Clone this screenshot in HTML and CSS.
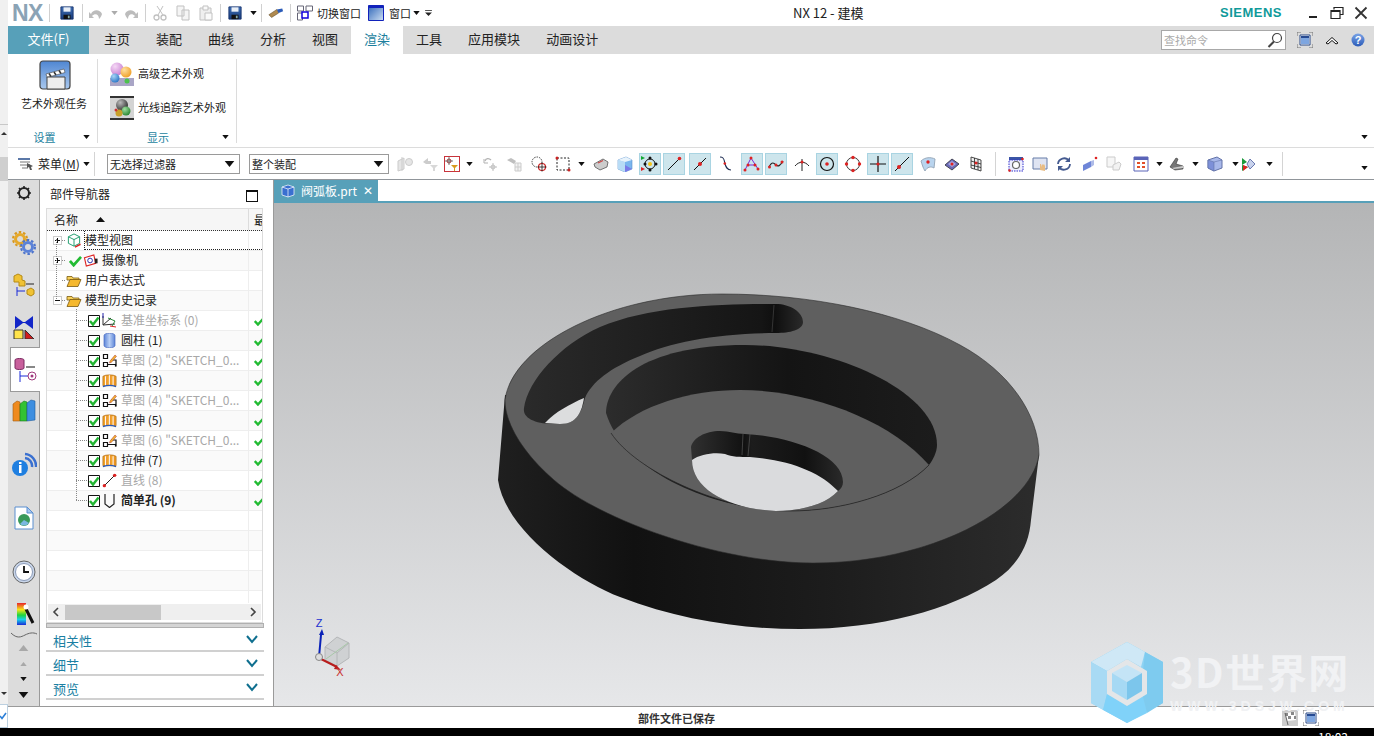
FILE: index.html
```html
<!DOCTYPE html>
<html lang="zh">
<head>
<meta charset="utf-8">
<title>NX 12 - 建模</title>
<link rel="stylesheet" href="styles.css">
</head>
<body>
<svg class="defs" aria-hidden="true">
  <defs>
    <linearGradient id="gPocket" x1="0" x2="1" y1="0" y2="0"><stop offset="0" stop-color="#2c2c2c"/><stop offset=".55" stop-color="#141414"/><stop offset="1" stop-color="#1c1c1c"/></linearGradient>
    <linearGradient id="gSide" gradientUnits="userSpaceOnUse" x1="498" x2="1040" y1="0" y2="0"><stop offset="0" stop-color="#1f1f1f"/><stop offset=".25" stop-color="#111"/><stop offset=".6" stop-color="#1c1c1c"/><stop offset="1" stop-color="#2c2c2c"/></linearGradient>
    <linearGradient id="gSlot" gradientUnits="userSpaceOnUse" x1="524" x2="803" y1="0" y2="0"><stop offset="0" stop-color="#2a2a2a"/><stop offset=".85" stop-color="#151515"/><stop offset=".9" stop-color="#0f0f0f"/><stop offset="1" stop-color="#2a2a2a"/></linearGradient>
    <linearGradient id="gHole" gradientUnits="userSpaceOnUse" x1="691" x2="843" y1="0" y2="0"><stop offset="0" stop-color="#303030"/><stop offset=".35" stop-color="#111"/><stop offset=".4" stop-color="#1c1c1c"/><stop offset=".75" stop-color="#111"/><stop offset="1" stop-color="#2a2a2a"/></linearGradient>
    <linearGradient id="gFloppy" x1="0" x2="0" y1="0" y2="1"><stop offset="0" stop-color="#3e6fb5"/><stop offset="1" stop-color="#173a78"/></linearGradient>
    <linearGradient id="gSky" x1="0" x2="1" y1="0" y2="1"><stop offset="0" stop-color="#2f66b8"/><stop offset="1" stop-color="#cfe0f4"/></linearGradient>
    <linearGradient id="gClap" x1="0" x2="0" y1="0" y2="1"><stop offset="0" stop-color="#4f86d2"/><stop offset="1" stop-color="#a9c8ee"/></linearGradient>
    <linearGradient id="gCyl" x1="0" x2="1" y1="0" y2="0"><stop offset="0" stop-color="#5c85d8"/><stop offset=".5" stop-color="#b9cff5"/><stop offset="1" stop-color="#5c85d8"/></linearGradient>
    <linearGradient id="gHelp" x1="0" x2="0" y1="0" y2="1"><stop offset="0" stop-color="#7aa3e6"/><stop offset="1" stop-color="#2b5bb8"/></linearGradient>
    <linearGradient id="gRainbow" x1="0" x2="0" y1="0" y2="1"><stop offset="0" stop-color="#e8232a"/><stop offset=".3" stop-color="#f5e51b"/><stop offset=".55" stop-color="#1fd43c"/><stop offset=".75" stop-color="#18cfe8"/><stop offset="1" stop-color="#1a2bd8"/></linearGradient>
    <radialGradient id="gBall1" cx=".35" cy=".3" r=".8"><stop offset="0" stop-color="#f5d8f5"/><stop offset="1" stop-color="#c47ad0"/></radialGradient>
    <radialGradient id="gBall2" cx=".35" cy=".3" r=".8"><stop offset="0" stop-color="#ffe0a0"/><stop offset="1" stop-color="#ee9a1e"/></radialGradient>
    <radialGradient id="gBall3" cx=".35" cy=".3" r=".8"><stop offset="0" stop-color="#a8d4f5"/><stop offset="1" stop-color="#2170c4"/></radialGradient>
    <radialGradient id="gBall4" cx=".35" cy=".3" r=".8"><stop offset="0" stop-color="#bbb"/><stop offset="1" stop-color="#222"/></radialGradient>
    <radialGradient id="gBall5" cx=".35" cy=".3" r=".8"><stop offset="0" stop-color="#a0e0a0"/><stop offset="1" stop-color="#1f7f28"/></radialGradient>
    <symbol id="floppy" viewBox="0 0 16 16"><path d="M1 1h14v14H1z" fill="url(#gFloppy)" stroke="#12306a"/><path d="M4 1.500h8v5H4z" fill="#e8eef6"/><path d="M4 10h8v5H4z" fill="#111"/><path d="M9 11h2v3H9z" fill="#8aa"/></symbol>
    <symbol id="arrow" viewBox="0 0 8 5"><path d="M0 0h8L4 5z" fill="#111"/></symbol>
    <symbol id="check" viewBox="0 0 14 12"><path d="M1 6l4 4.500L13 1.500" fill="none" stroke="#22bb33" stroke-width="3"/></symbol>
    <symbol id="box" viewBox="0 0 12 12"><path d="M.5.500h11v11H.5z" fill="#fff" stroke="#111"/><path d="M2 6l3 3.500L10.500 2.500" fill="none" stroke="#22b533" stroke-width="2.400"/></symbol>
    <symbol id="folder" viewBox="0 0 16 14"><path d="M1 3h5l1 1.500h6v2H1z" fill="#f8d25c" stroke="#7a5a10" stroke-width=".8"/><path d="M1 13l3-7h11l-3 7z" fill="#f5b82e" stroke="#7a5a10" stroke-width=".8"/></symbol>
    <symbol id="sketch" viewBox="0 0 15 15"><path d="M1.500 1.500h4v4h-4zM1.500 9.500h4v4h-4zM5.500 11.500h8v2" fill="#fff" stroke="#111" stroke-width="1.200"/><path d="M9 7h5v6.500" fill="none" stroke="#111" stroke-width="1.200"/><path d="M8 8l5-6 1.500 1.300-5 6-2 .6z" fill="#f3b52e" stroke="#a33" stroke-width=".5"/></symbol>
    <symbol id="extrude" viewBox="0 0 16 15"><path d="M1 3c3-2 11-2 14 0v10H1z" fill="#f2a428" stroke="#b36a10" stroke-width=".8"/><path d="M4 3v10M8 2v11M12 3v10" stroke="#fff" stroke-width="1.400"/><path d="M4.800 3v10M8.800 2v11M12.800 3v10" stroke="#e0700f" stroke-width=".6"/><path d="M1 14c4-1.500 10-1.500 14 0" stroke="#2b5bb8" stroke-width="1.500" fill="none"/></symbol>
    <symbol id="ln" viewBox="0 0 16 16"><path d="M2 14L14 2" stroke="#111" stroke-width="1"/><circle cx="2.500" cy="13.500" r="1.800" fill="#d22"/><circle cx="13.500" cy="2.500" r="1.800" fill="#d22"/></symbol>
    <symbol id="sw" viewBox="0 0 16 16"><path d="M3 1c5 0 4 4 5 7s2 6 6 6" fill="none" stroke="#1c2a50" stroke-width="1.100"/><circle cx="7.800" cy="7.500" r="1.300" fill="#d22"/></symbol>
    <symbol id="panel" viewBox="0 0 16 16"><path d="M0 4V0h4M12 0h4v4M16 12v4h-4M4 16H0v-4" fill="none" stroke="#777"/><path d="M3 3h10v10H3z" fill="#fff" stroke="#2b4a88"/><path d="M4 4h8v2H4z" fill="#264a92"/><path d="M4 6h8v6H4z" fill="#7ea6e0"/></symbol>
  </defs>
</svg>

<div class="upper">
  <div class="strip">
    <div class="strip-top"></div><span class="strip-tri"></span><div class="strip-gray"></div>
    <span class="strip-down"></span>
    <div class="strip-check"><svg viewBox="0 0 7 8"><path d="M0 4l2 2.500L6 1" fill="none" stroke="#2b7fd8" stroke-width="1.600"/></svg></div>
  </div>
  <div class="main">
    <header class="titlebar">
      <div class="qat">
        <b class="logo">NX</b><i class="qsep"></i>
        <svg class="q14"><use href="#floppy"/></svg><i class="qsep"></i>
        <svg class="q16 dim" viewBox="0 0 16 14"><path d="M3 8c2-5 9-5 11 0-1 3-2 4-3 5 0-5-4-6-7-3l2 2H1V6z" fill="#b5b5b5"/></svg>
        <svg class="a6 faint"><use href="#arrow"/></svg>
        <svg class="q16 dim" viewBox="0 0 16 14"><path d="M13 8C11 3 4 3 2 8c1 3 2 4 3 5 0-5 4-6 7-3l-2 2h5V6z" fill="#b5b5b5"/></svg><i class="qsep"></i>
        <svg class="q16 dim" viewBox="0 0 16 16"><path d="M11 1L6 10M5 1l6 9" stroke="#bbb" fill="none"/><circle cx="4.500" cy="12.500" r="2.500" fill="none" stroke="#bbb" stroke-width="1.300"/><circle cx="11.500" cy="12.500" r="2.500" fill="none" stroke="#bbb" stroke-width="1.300"/></svg>
        <svg class="q16 dim" viewBox="0 0 16 16"><path d="M2 1h7v10H2zM7 5h7v10H7z" fill="#f4f4f4" stroke="#bbb"/></svg>
        <svg class="q16 dim" viewBox="0 0 16 16"><path d="M2 3h11v12H2z" fill="#eee" stroke="#bbb"/><path d="M5 1h5v4H5zM7 8h7v7H7z" fill="#fafafa" stroke="#bbb"/></svg><i class="qsep"></i>
        <svg class="q14"><use href="#floppy"/></svg>
        <svg class="a6"><use href="#arrow"/></svg><i class="qsep"></i>
        <svg class="q16" viewBox="0 0 18 12"><path d="M1 8l9-6 2 4-8 5z" fill="#b08a50" stroke="#5b4520" stroke-width=".6"/><path d="M10 2l6-1 1 3-5 2z" fill="#2b5bb8"/></svg><i class="qsep"></i>
        <svg class="q16" viewBox="0 0 16 16"><path d="M.5 1h6v5h-6zM9 1h6.500v5H9zM.5 8h5v7h-5z" fill="#fff" stroke="#667"/><path d="M5 7h6v6H5z" fill="#fff" stroke="#10d" stroke-width="1.500"/></svg>
        <span class="qtext">切换窗口</span>
        <svg class="q16 q-win" viewBox="0 0 16 16"><path d="M.5.500h15v15H.5z" fill="url(#gSky)" stroke="#12b"/><path d="M1 1h14v2H1z" fill="#12b"/></svg>
        <span class="qtext">窗口</span>
        <svg class="a6"><use href="#arrow"/></svg>
        <svg class="cust" viewBox="0 0 8 7"><path d="M0 0h8v1H0z M0 3h8L4 7z" fill="#222"/></svg>
      </div>
      <div class="doc-title">NX 12 - 建模</div>
      <div class="brand">SIEMENS</div>
      <div class="winctl">
        <svg viewBox="0 0 14 14"><path d="M3 11h8" stroke="#222" stroke-width="2"/></svg>
        <svg viewBox="0 0 14 14"><path d="M4 3.500V1.500h9v7h-3M1 4.500h9v8H1z" fill="#fff" stroke="#222" stroke-width="1.200"/><path d="M1 5h9" stroke="#222" stroke-width="2"/></svg>
        <svg viewBox="0 0 14 14"><path d="M1.500 1.500l11 11M12.500 1.500l-11 11" stroke="#333" stroke-width="1.800"/></svg>
      </div>
    </header>

    <nav class="tabs">
      <a class="tab-file">文件(F)</a>
      <a class="tab">主页</a><a class="tab">装配</a><a class="tab">曲线</a><a class="tab">分析</a><a class="tab">视图</a>
      <a class="tab active">渲染</a><a class="tab">工具</a><a class="tab">应用模块</a><a class="tab">动画设计</a>
      <div class="tabs-right">
        <div class="search"><span>查找命令</span><svg viewBox="0 0 16 16"><circle cx="10" cy="6" r="4.500" fill="#fff" stroke="#444" stroke-width="1.200"/><path d="M7 9.500L1.500 15" stroke="#444" stroke-width="2"/></svg></div>
        <svg class="rt-panel"><use href="#panel"/></svg>
        <svg class="rt-chev" viewBox="0 0 14 9"><path d="M1 7l6-5.500L13 7l-2 1-4-3.500L3 8z" fill="#fff" stroke="#111"/></svg>
        <svg class="rt-help" viewBox="0 0 14 14"><circle cx="7" cy="7" r="6.500" fill="url(#gHelp)"/><text x="7" y="11" class="help-q">?</text></svg>
      </div>
    </nav>

    <section class="ribbon">
      <div class="group g1">
        <div class="big">
          <svg class="clap" viewBox="0 0 32 30"><rect x="1" y="1" width="30" height="28" rx="3" fill="url(#gClap)" stroke="#444" stroke-width="1.200"/><path d="M7 14l18-5 1 3.500-18 5z" fill="#fff" stroke="#444" stroke-width=".6"/><path d="M10 13.500l2 3M15 12l2 3M20 10.500l2 3" stroke="#333" stroke-width="1.500"/><path d="M8 17h18v12H8z" fill="#eee" stroke="#444"/></svg>
          <span>艺术外观任务</span>
        </div>
        <div class="glabel"><span>设置</span><svg class="a6"><use href="#arrow"/></svg></div>
      </div>
      <div class="group g2">
        <div class="smalls">
          <div class="small"><svg class="rb24" viewBox="0 0 24 24"><path d="M0 16h24v8H0z" fill="#a9a5c6"/><circle cx="7" cy="7" r="6.500" fill="url(#gBall1)"/><circle cx="16" cy="10" r="5.500" fill="url(#gBall2)"/><circle cx="5" cy="16" r="4.500" fill="url(#gBall3)"/><circle cx="17" cy="19" r="2.500" fill="#4dc24d"/></svg><span>高级艺术外观</span></div>
          <div class="small"><svg class="rb24" viewBox="0 0 24 24"><path d="M0 0h24v24H0z" fill="#d4d4d4"/><path d="M0 0h24v2H0zM0 22h24v2H0z" fill="#333"/><circle cx="12" cy="9" r="6" fill="url(#gBall4)"/><circle cx="16" cy="15" r="4.500" fill="url(#gBall5)"/><circle cx="9" cy="17" r="3.500" fill="#c8a02a"/><circle cx="6" cy="14" r="1.500" fill="#c33"/></svg><span>光线追踪艺术外观</span></div>
        </div>
        <div class="glabel"><span>显示</span><svg class="a6"><use href="#arrow"/></svg></div>
      </div>
      <svg class="a6 ribbon-more"><use href="#arrow"/></svg>
    </section>

    <section class="toolbar">
      <div class="menu-btn">
        <svg viewBox="0 0 16 14"><path d="M0 1h12v2H0z" fill="#5b78a8"/><path d="M2 5h10M2 8h10M4 11h6" stroke="#777"/><path d="M9 6l6 3-2 1 1 3-2 0-1-3-2 1z" fill="#555"/></svg>
        <span>菜单(<u>M</u>)</span><svg class="a6"><use href="#arrow"/></svg>
      </div>
      <i class="tsep"></i>
      <div class="select s-a"><span>无选择过滤器</span><svg class="a7"><use href="#arrow"/></svg></div>
      <div class="select s-b"><span>整个装配</span><svg class="a7"><use href="#arrow"/></svg></div>
      <div class="tools">
        <div><svg class="t16 off" viewBox="0 0 16 16"><path d="M1 5l6-3v11l-6 2zM5 1v14" fill="#ddd" stroke="#bbb"/><circle cx="12" cy="6" r="3.500" fill="#ddd" stroke="#bbb"/></svg></div>
        <div><svg class="t16 off" viewBox="0 0 16 16"><path d="M1 6l5-4v3h3v3H4z" fill="#bbb"/><path d="M8 9h8l-3 3v3h-2v-3z" fill="#ccc"/></svg></div>
        <div><div class="redbox"><svg class="t14" viewBox="0 0 14 14"><circle cx="4" cy="4" r="2" fill="none" stroke="#a33"/><path d="M4 0v8M0 4h8" stroke="#555" stroke-width=".8"/><path d="M6 8h7l-3 3v3H9v-3z" fill="#d89b1e"/></svg></div></div>
        <div><svg class="a6"><use href="#arrow"/></svg></div>
        <div><svg class="t16 off" viewBox="0 0 16 16"><path d="M2 5c1-3 4-3 6-1" fill="none" stroke="#999" stroke-width="1.300"/><path d="M1 3v4h4" fill="none" stroke="#999"/><path d="M10 7v8M6 11h8" stroke="#aaa"/><circle cx="10" cy="11" r="2" fill="none" stroke="#aaa"/></svg></div>
        <div><svg class="t16 off" viewBox="0 0 16 16"><path d="M1 4l4-2 5 3-2 3z" fill="#aaa"/><path d="M9 7h6v8H9zM12 7v8M9 11h6" fill="#eee" stroke="#bbb"/></svg></div>
        <div><svg class="t16" viewBox="0 0 16 16"><circle cx="6" cy="6" r="5" fill="none" stroke="#444" stroke-dasharray="1.500 1"/><circle cx="11" cy="11" r="3.500" fill="#fff" stroke="#c22" stroke-width="1.200"/><path d="M11 6.500v9M6.500 11h9" stroke="#111" stroke-width=".8"/></svg></div>
        <div><svg class="t16" viewBox="0 0 16 16"><path d="M2 2h12v12H2z" fill="none" stroke="#222" stroke-dasharray="2 1.500"/><circle cx="2" cy="2" r="1.500" fill="#c22"/><circle cx="14" cy="14" r="1.500" fill="#c22"/></svg></div>
        <div><svg class="a6"><use href="#arrow"/></svg></div>
        <div><svg class="t16" viewBox="0 0 16 16"><path d="M1 8l9-5 5 3-1 5-7 3-5-3z" fill="#ccc" stroke="#555" stroke-width=".8"/><path d="M5 7l5-2.500" stroke="#c44" stroke-width="1.200"/></svg></div>
        <div><svg class="t16" viewBox="0 0 16 16"><path d="M1 4l8-3 6 3v9l-7 3-7-3z" fill="#7ab6ee" stroke="#5b8fc9" stroke-width=".6"/><path d="M1 4l7 2v10l-7-3z" fill="#b8dcf6"/><path d="M1 4l8-3 6 3-7 2z" fill="#e8f3fb"/><path d="M8 9l7 4-7 3z" fill="#7a7ae8"/></svg></div>
        <div><div class="on"><svg class="t18" viewBox="0 0 18 18"><circle cx="9" cy="9" r="5" fill="none" stroke="#111"/><circle cx="9" cy="9" r="2" fill="#f5c518"/><circle cx="9" cy="3" r="1.500" fill="#111"/><circle cx="9" cy="15" r="1.500" fill="#111"/><circle cx="15" cy="9" r="1.500" fill="#111"/><circle cx="4" cy="9" r="1.500" fill="#111"/><path d="M0 1l4 2-4 2z" fill="#1a3"/><path d="M0 12l4 2-4 2z" fill="#d22"/></svg></div></div>
        <div><div class="on"><svg class="t16" viewBox="0 0 16 16"><path d="M2 14L14 2" stroke="#111"/><circle cx="13.500" cy="2.500" r="1.800" fill="#d22"/></svg></div></div>
        <i></i>
        <div><div class="on"><svg class="t16" viewBox="0 0 16 16"><path d="M2 14L14 2" stroke="#111"/><circle cx="8" cy="8" r="2" fill="#d22"/></svg></div></div>
        <div><svg class="t16"><use href="#sw"/></svg></div>
        <i></i>
        <div><div class="on"><svg class="t18" viewBox="0 0 18 18"><path d="M2 15L8 3l7 11" fill="none" stroke="#7a2ad8"/><path d="M4 10h9" stroke="#7a2ad8"/><circle cx="2" cy="15" r="1.500" fill="#d22"/><circle cx="8" cy="3" r="1.500" fill="#d22"/><circle cx="15" cy="14" r="1.500" fill="#d22"/><circle cx="5" cy="10" r="1.500" fill="#d22"/><circle cx="12" cy="10" r="1.500" fill="#d22"/></svg></div></div>
        <div><div class="on"><svg class="t18" viewBox="0 0 18 18"><path d="M2 12c3-6 5-4 7-2s4 1 7-4" fill="none" stroke="#222" stroke-width="1.200"/><circle cx="2.500" cy="12" r="1.500" fill="#d22"/><circle cx="9" cy="10" r="1.500" fill="#d22"/><circle cx="15" cy="7" r="1.500" fill="#d22"/></svg></div></div>
        <div><svg class="t16" viewBox="0 0 16 16"><path d="M1 10c4-5 10-5 14 0M8 3v12" fill="none" stroke="#222"/><circle cx="8" cy="6" r="1.500" fill="#d22"/></svg></div>
        <div><div class="on"><svg class="t18" viewBox="0 0 18 18"><circle cx="9" cy="9" r="6.500" fill="none" stroke="#111" stroke-width="1.200"/><circle cx="9" cy="9" r="1.800" fill="#d22"/></svg></div></div>
        <div><svg class="t18" viewBox="0 0 18 18"><circle cx="9" cy="9" r="6.500" fill="none" stroke="#333"/><g fill="#d22"><circle cx="9" cy="2.500" r="1.700"/><circle cx="9" cy="15.500" r="1.700"/><circle cx="2.500" cy="9" r="1.700"/><circle cx="15.500" cy="9" r="1.700"/></g></svg></div>
        <div><div class="on"><svg class="t18" viewBox="0 0 18 18"><path d="M9 1v16M1 9h16" stroke="#111" stroke-width="1.200"/><circle cx="9" cy="9" r="1.600" fill="#d22"/></svg></div></div>
        <div><div class="on"><svg class="t16" viewBox="0 0 16 16"><path d="M1 15L15 1" stroke="#111"/><circle cx="5" cy="11" r="2" fill="#d22"/></svg></div></div>
        <div><svg class="t16" viewBox="0 0 16 16"><path d="M1 5c4-4 10-4 14-2l-1 9c-3-2-7-1-9 3C3 12 2 8 1 5z" fill="#b9d4ee" stroke="#9ab"/><circle cx="8" cy="6" r="1.700" fill="#d22"/></svg></div>
        <div><svg class="t16" viewBox="0 0 16 16"><path d="M1 9l7-6 7 5-7 6z" fill="#6a6ab8" stroke="#445"/><path d="M4 8l4-3 4 3-4 3z" fill="#a8a8e0"/><circle cx="8" cy="8" r="1.500" fill="#d22"/></svg></div>
        <div><svg class="t16" viewBox="0 0 16 16"><path d="M3 1l10 3v11L3 12zM6.500 2v11M10 3v11M3 5l10 3M3 9l10 2.500" fill="#eee" stroke="#222" stroke-width=".8"/><circle cx="8" cy="7" r="1.500" fill="#d22"/></svg></div>
        <div class="vsep"><i class="tsep"></i></div>
        <div><svg class="t16" viewBox="0 0 16 16"><path d="M1 1h14v3H1z" fill="#3a55a5"/><path d="M1 4h14v11H1z" fill="#eef" stroke="#33c" stroke-dasharray="1.500 1"/><circle cx="8" cy="9" r="3.500" fill="#fff" stroke="#666" stroke-width="1.200"/><circle cx="1.500" cy="14.500" r="1.300" fill="#d22"/><circle cx="14.500" cy="3" r="1.300" fill="#d22"/></svg></div>
        <div><svg class="t16" viewBox="0 0 16 16"><path d="M1 2h14v11H1z" fill="#dfe4f2" stroke="#667ca8"/><path d="M8 14V8l1 0 0 3 1-3 1 1 1-1 1 2 0 5z" fill="#e8bc84"/></svg></div>
        <div><svg class="t16" viewBox="0 0 16 16"><path d="M2 8a6 6 0 0 1 11-3M14 8a6 6 0 0 1-11 3" fill="none" stroke="#445a90" stroke-width="1.800"/><path d="M14 1v5h-5zM2 15v-5h5z" fill="#445a90"/></svg></div>
        <div><svg class="t16" viewBox="0 0 16 16"><path d="M1 9l8-4v6l-8 4z" fill="#6f86d8"/><path d="M9 5l3-1v5l-3 2z" fill="#aebbe8"/><circle cx="14" cy="2" r="1.300" fill="#d22"/></svg></div>
        <div><svg class="t16 off" viewBox="0 0 16 16"><path d="M1 1h8v10H1z" fill="#f4f4f4" stroke="#bbb"/><path d="M7 9l6-3 2 2-2 6H7z" fill="#eee" stroke="#bbb"/></svg></div>
        <div><svg class="t16" viewBox="0 0 16 16"><path d="M1 1h14v14H1z" fill="#fff" stroke="#5a64b8"/><path d="M1 1h14v3H1z" fill="#5a64b8"/><path d="M4 6h3v2H4zM9 6h3v2H9zM4 10h3v2H4zM9 10h3v2H9z" fill="#e2502a"/></svg></div>
        <div><svg class="a6"><use href="#arrow"/></svg></div>
        <div><svg class="t16" viewBox="0 0 16 16"><path d="M1 11l6-9 2 1-2 5 7 2v3l-8 1z" fill="#777" stroke="#333" stroke-width=".6"/><path d="M3 12l11-2v2l-9 1z" fill="#ccc"/></svg></div>
        <div><svg class="a6"><use href="#arrow"/></svg></div>
        <div><svg class="t16" viewBox="0 0 16 16"><path d="M1 4l9-3 5 3v8l-8 3-6-3z" fill="#a8b8ea" stroke="#6272a8"/><path d="M1 4l6 2v9l-6-3zM7 6l8-2" fill="#7d90d8" stroke="#6272a8" stroke-width=".6"/></svg></div>
        <div><svg class="a6"><use href="#arrow"/></svg></div>
        <div><svg class="t16" viewBox="0 0 16 16"><path d="M8 3l5 5-5 5-3-5z" fill="#c8d2ec" stroke="#6a7ab0"/><path d="M0 2l5 4-5 3zM0 9l6 2-6 4z" fill="#1a9a3a"/><path d="M1 9l5 2-5 4z" fill="#d22"/></svg></div>
        <div><svg class="a6"><use href="#arrow"/></svg></div>
        <div class="vsep"><i class="tsep"></i></div>
      </div>
      <svg class="a6 toolbar-more"><use href="#arrow"/></svg>
    </section>

    <section class="work">
      <aside class="resbar">
        <div><svg class="r16" viewBox="0 0 16 16"><circle cx="8" cy="8" r="5" fill="none" stroke="#222" stroke-width="2"/><path d="M8 1v3M8 12v3M1 8h3M12 8h3M3 3l2 2M11 11l2 2M13 3l-2 2M3 13l2-2" stroke="#222" stroke-width="1.600"/></svg></div>
        <i></i>
        <div><svg class="r24" viewBox="0 0 24 24"><circle cx="8" cy="8" r="4.500" fill="none" stroke="#e6a92a" stroke-width="3"/><circle cx="8" cy="8" r="7" fill="none" stroke="#d9981c" stroke-width="2" stroke-dasharray="2.500 2"/><circle cx="16" cy="16" r="4.500" fill="none" stroke="#5b82d8" stroke-width="3"/><circle cx="16" cy="16" r="7" fill="none" stroke="#4d74cc" stroke-width="2" stroke-dasharray="2.500 2"/></svg></div>
        <div><svg class="r24" viewBox="0 0 24 24"><path d="M2 3l4-2 4 2v4l3 1v5H7V9H2z" fill="#f0c234" stroke="#b58a14"/><path d="M5 14v9M5 18h8" stroke="#1a2bd8"/><path d="M15 17l4-2 3 2v4l-3 2-4-2z" fill="#f0c234" stroke="#b58a14"/><path d="M14 11h8" stroke="#222"/></svg></div>
        <div><svg class="r24" viewBox="0 0 24 24"><path d="M3 1l8 6 2 0 8-6v13l-8-6h-2l-8 6z" fill="#1226c8"/><path d="M2 15h9v9H2z" fill="#ffe44a" stroke="#333"/><path d="M13 24l0-9 9 9z" fill="#d21c1c" stroke="#333"/></svg></div>
        <div class="res-active"><svg class="r26" viewBox="0 0 26 26"><path d="M3 3c0-2 9-2 9 0v8c0 2-9 2-9 0z" fill="#c8609c" stroke="#7a2a60"/><path d="M14 10h9" stroke="#111"/><path d="M8 14v11M8 19h8" stroke="#1a2bd8"/><circle cx="20" cy="19" r="4" fill="#fff" stroke="#a0387c"/><circle cx="20" cy="19" r="1.500" fill="#a0387c"/></svg></div>
        <div><svg class="r24" viewBox="0 0 24 24"><path d="M1 5l4-3 3 1v19H1z" fill="#ef8a1e" stroke="#a05a10" stroke-width=".6"/><path d="M8 5l4-3 3 1v19H8z" fill="#33c233" stroke="#1c7a1c" stroke-width=".6"/><path d="M15 4l4-3 4 1v19l-8 1z" fill="#3d8ee0" stroke="#1c5a9c" stroke-width=".6"/></svg></div>
        <i></i>
        <div><svg class="r26" viewBox="0 0 26 26"><path d="M14 2a12 12 0 0 1 11 13M14 6a8 8 0 0 1 7 9" fill="none" stroke="#3a70d0" stroke-width="2.500"/><circle cx="9" cy="16" r="8" fill="#1f7fe0"/><path d="M8 10h2.500v2H8zM8 13h2.500v8H8z" fill="#fff"/></svg></div>
        <i></i>
        <div><svg class="r24" viewBox="0 0 24 24"><path d="M3 1h12l6 6v16H3z" fill="#fff" stroke="#5b8fd0"/><path d="M15 1v6h6z" fill="#a8c8f0" stroke="#5b8fd0"/><circle cx="12" cy="14" r="6" fill="#3a9a5a"/><path d="M12 14l5 3a6 6 0 0 1-9 1z" fill="#7ab8e0"/></svg></div>
        <i></i>
        <div><svg class="r24" viewBox="0 0 24 24"><circle cx="12" cy="12" r="11" fill="#c9d6ea" stroke="#666"/><circle cx="12" cy="12" r="8.500" fill="#fff" stroke="#8a9ab8"/><path d="M12 6v6h5" stroke="#111" stroke-width="1.800" fill="none"/></svg></div>
        <i></i>
        <div><svg class="r24" viewBox="0 0 24 24"><rect x="5" y="1" width="9" height="22" fill="url(#gRainbow)"/><path d="M14 7l7 14" stroke="#111" stroke-width="3"/><circle cx="14" cy="5" r="2.500" fill="#fff"/></svg></div>
        <i></i>
        <div class="res-nav"><svg class="a7 up"><use href="#arrow"/></svg></div>
        <div class="res-nav"><svg class="a6 up"><use href="#arrow"/></svg></div>
        <div class="res-nav"><svg class="a6"><use href="#arrow"/></svg></div>
        <div class="res-nav"><svg class="a7"><use href="#arrow"/></svg></div>
        <svg class="res-curve" viewBox="0 0 28 8"><path d="M1 3c6 6 10 4 14 2s8-3 12-1" fill="none" stroke="#666"/></svg>
      </aside>

      <aside class="panel">
        <div class="panel-head"><span>部件导航器</span><i class="maxbox"></i></div>
        <div class="table">
          <div class="thead"><div class="th-name"><span>名称</span><svg class="sort" viewBox="0 0 9 5"><path d="M4.500 0L9 5H0z" fill="#111"/></svg></div><div class="th-2">最</div></div>
          <div class="tree">
            <i class="dots-v dv1"></i><i class="dots-v dv2"></i>
            <div class="row"><div class="name"><i class="exp plus"></i><i class="dash"></i><svg class="ric" viewBox="0 0 16 16"><path d="M8 1l6 3v7l-6 3-6-3V4zM2 4l6 3 6-3M8 7v7" fill="none" stroke="#1a9a6a"/><path d="M9 15l6-3" stroke="#d22" stroke-width="1.500"/></svg><span class="focus">模型视图</span></div><div class="c2"></div></div>
            <div class="row alt"><div class="name"><i class="exp plus"></i><i class="dash"></i><svg class="rchk"><use href="#check"/></svg><svg class="ric cam" viewBox="0 0 16 16"><path d="M1 5l10-3 2 9-10 3z" fill="#fff" stroke="#d22" stroke-width="1.200"/><circle cx="7" cy="8" r="2.500" fill="none" stroke="#22a"/><path d="M12 6h3v5h-3" fill="#222"/></svg><span>摄像机</span></div><div class="c2"></div></div>
            <div class="row"><div class="name"><i class="noexp"></i><i class="dash"></i><svg class="ric"><use href="#folder"/></svg><span>用户表达式</span></div><div class="c2"></div></div>
            <div class="row alt"><div class="name"><i class="exp minus"></i><i class="dash"></i><svg class="ric"><use href="#folder"/></svg><span>模型历史记录</span></div><div class="c2"></div></div>
            <div class="row"><div class="name leaf"><i class="dash"></i><svg class="cb"><use href="#box"/></svg><svg class="fic" viewBox="0 0 15 15"><path d="M1 3v9l12-1M1 12l8-7" fill="none" stroke="#333"/><path d="M6 5l7 3-3 5" fill="none" stroke="#2a8a3a"/><path d="M1 0v5" stroke="#22a"/><path d="M8 13l6 1" stroke="#d22"/></svg><span class="mute">基准坐标系 (0)</span></div><div class="c2"><svg class="st"><use href="#check"/></svg></div></div>
            <div class="row alt"><div class="name leaf"><i class="dash"></i><svg class="cb"><use href="#box"/></svg><svg class="fic" viewBox="0 0 15 15"><path d="M2 2.500c0-3 11-3 11 0v10c0 3-11 3-11 0z" fill="url(#gCyl)" stroke="#4a6ac0" stroke-width=".7"/></svg><span>圆柱 (1)</span></div><div class="c2"><svg class="st"><use href="#check"/></svg></div></div>
            <div class="row"><div class="name leaf"><i class="dash"></i><svg class="cb"><use href="#box"/></svg><svg class="fic"><use href="#sketch"/></svg><span class="mute">草图 (2) "SKETCH_0...</span></div><div class="c2"><svg class="st"><use href="#check"/></svg></div></div>
            <div class="row alt"><div class="name leaf"><i class="dash"></i><svg class="cb"><use href="#box"/></svg><svg class="fic"><use href="#extrude"/></svg><span>拉伸 (3)</span></div><div class="c2"><svg class="st"><use href="#check"/></svg></div></div>
            <div class="row"><div class="name leaf"><i class="dash"></i><svg class="cb"><use href="#box"/></svg><svg class="fic"><use href="#sketch"/></svg><span class="mute">草图 (4) "SKETCH_0...</span></div><div class="c2"><svg class="st"><use href="#check"/></svg></div></div>
            <div class="row alt"><div class="name leaf"><i class="dash"></i><svg class="cb"><use href="#box"/></svg><svg class="fic"><use href="#extrude"/></svg><span>拉伸 (5)</span></div><div class="c2"><svg class="st"><use href="#check"/></svg></div></div>
            <div class="row"><div class="name leaf"><i class="dash"></i><svg class="cb"><use href="#box"/></svg><svg class="fic"><use href="#sketch"/></svg><span class="mute">草图 (6) "SKETCH_0...</span></div><div class="c2"><svg class="st"><use href="#check"/></svg></div></div>
            <div class="row alt"><div class="name leaf"><i class="dash"></i><svg class="cb"><use href="#box"/></svg><svg class="fic"><use href="#extrude"/></svg><span>拉伸 (7)</span></div><div class="c2"><svg class="st"><use href="#check"/></svg></div></div>
            <div class="row"><div class="name leaf"><i class="dash"></i><svg class="cb"><use href="#box"/></svg><svg class="fic"><use href="#ln"/></svg><span class="mute">直线 (8)</span></div><div class="c2"><svg class="st"><use href="#check"/></svg></div></div>
            <div class="row alt"><div class="name leaf"><i class="dash"></i><svg class="cb"><use href="#box"/></svg><svg class="fic" viewBox="0 0 15 15"><path d="M3 1v10l4.500 3.500L12 11V1" fill="none" stroke="#222" stroke-width="1.200"/></svg><b>简单孔 (9)</b></div><div class="c2"><svg class="st"><use href="#check"/></svg></div></div>
            <div class="row"><div class="name"></div><div class="c2"></div></div>
            <div class="row alt"><div class="name"></div><div class="c2"></div></div>
            <div class="row"><div class="name"></div><div class="c2"></div></div>
            <div class="row alt"><div class="name"></div><div class="c2"></div></div>
            <div class="row"><div class="name"></div><div class="c2"></div></div>
          </div>
          <div class="hscroll">
            <svg viewBox="0 0 8 10"><path d="M6 1L2 5l4 4" fill="none" stroke="#444" stroke-width="1.600"/></svg>
            <div class="track"><i></i></div>
            <svg viewBox="0 0 8 10"><path d="M2 1l4 4-4 4" fill="none" stroke="#444" stroke-width="1.600"/></svg>
          </div>
        </div>
        <div class="splitter"></div>
        <div class="acc"><span>相关性</span><svg viewBox="0 0 12 9"><path d="M1 1l5 6 5-6" fill="none" stroke="#0f6f8f" stroke-width="2"/></svg></div>
        <div class="acc"><span>细节</span><svg viewBox="0 0 12 9"><path d="M1 1l5 6 5-6" fill="none" stroke="#0f6f8f" stroke-width="2"/></svg></div>
        <div class="acc"><span>预览</span><svg viewBox="0 0 12 9"><path d="M1 1l5 6 5-6" fill="none" stroke="#0f6f8f" stroke-width="2"/></svg></div>
      </aside>

      <div class="graphics">
        <div class="doc-tabs">
          <div class="doc-tab">
            <svg viewBox="0 0 14 14"><path d="M1 3l6-2 6 2v8l-6 2-6-2z" fill="#3a6fd0" stroke="#fff" stroke-width=".7"/><path d="M1 3l6 2 6-2M7 5v8" fill="none" stroke="#fff" stroke-width=".7"/></svg>
            <span>阀弧板.prt</span><b>✕</b>
          </div>
        </div>
        <div class="canvas">
          <svg class="scene" viewBox="274 203 1100 503">
            <path fill="url(#gSide)" d="M505 395L498 480C505 530 575 580 620 597C680 620 740 629 800 629C880 629 950 610 996 580C1018 565 1029 545 1031 520L1039 455Z"/>
            <path fill="#5f5f5f" stroke="#2a2a2a" stroke-width=".6" d="M505 400C512 345 610 294 722 294C810 294 900 312 960 345C1010 372 1039 415 1039 455C1030 510 930 563 813 563C720 563 600 520 554 480C525 455 505 425 505 400Z"/>
            <path fill="url(#gSlot)" d="M524 408C528 380 560 345 600 327C650 306 720 304 776 304C790 304 803 312 803 322C803 330 790 333 776 333C720 333 670 342 640 356C610 368 592 382 585 398C582 410 578 424 560 424C540 425 522 420 524 408Z"/>
            <path fill="#dcddde" d="M545 423C555 412 570 404 584 398C582 410 578 424 560 424Z"/>
            <path stroke="#444" stroke-width=".7" d="M774 305L772 332"/>
            <path fill="url(#gPocket)" d="M606 413C606 385 640 345 745 345C830 345 937 390 937 445C937 452 933 460 929 465C900 495 840 511 790 511C720 511 625 475 606 413Z"/>
            <path fill="#5f5f5f" d="M611 433C640 405 690 390 740 390C810 390 890 420 929 465C900 495 840 511 790 511C720 511 635 470 611 433Z"/>
            <path fill="none" stroke="#222" stroke-width=".7" d="M929 465C900 495 840 511 790 511C720 511 635 470 611 433"/>
            <path fill="url(#gHole)" d="M691 447C693 438 705 431 720 431C730 431 735 434 745 434C790 436 843 455 843 482C843 486 841 489 838 491C825 505 800 511 776 511C730 509 692 490 692 460Z"/>
            <path fill="#dadbdd" d="M692 460C700 454 715 452 725 454C732 457 740 457 750 457C790 460 820 472 838 491C825 505 800 511 776 511C730 509 692 490 692 460Z"/>
            <path stroke="#555" stroke-width=".7" d="M743 434L742 455M750 434L748 456"/>
          </svg>
          <svg class="triad" viewBox="0 0 44 62">
            <path d="M11 30l12-10 12 6v15l-12 8-12-6z" fill="#c8cacc" fill-opacity=".7" stroke="#b4b6b8"/>
            <path d="M11 30l12 6 12-10M23 36v13" fill="none" stroke="#b4b6b8"/>
            <path d="M12 42L34 26" stroke="#a8c8a8" stroke-width="1"/>
            <path d="M5 40L7 18" stroke="#0a22b8" stroke-width="2"/><path d="M8 12l-3 6h5z" fill="#0a22b8"/>
            <path d="M5 41L23 50" stroke="#b81c1c" stroke-width="2"/><path d="M27 53l-7-1 2-4z" fill="#b81c1c"/>
            <circle cx="5" cy="40" r="3.500" fill="#ddd" stroke="#888"/>
            <text x="5" y="10" class="tz">Z</text><text x="26" y="59" class="tx">X</text>
          </svg>
        </div>
      </div>
    </section>

    <footer class="status">
      <span class="status-msg">部件文件已保存</span>
      <div class="status-ic">
        <svg class="flag" viewBox="0 0 16 16"><path d="M0 0h16v16H0z" fill="#ccc"/><path d="M3 3l10-1 1 8-9 1z" fill="#fff"/><path d="M3 3h3v3H3zM9 2h3v3H9zM6 6h3v3H6zM12 6h2v3h-2z" fill="#888"/><path d="M3 3l3 12" stroke="#666"/></svg>
        <svg class="flag"><use href="#panel"/></svg>
      </div>
    </footer>
  </div>
</div>
<div class="taskbar"><span>18:03</span></div>

<div class="watermark">
  <svg viewBox="0 0 72 81">
    <path d="M36 0L72 20v41L36 81 0 61V20z" fill="#8ed3f3"/>
    <path d="M36 0L54 10 50 25 36 17 16 29 0 20z" fill="#cfe8f6"/>
    <path d="M0 20l16 9v23L12 68 0 61z" fill="#a8daf4"/>
    <path d="M12 68l4-16 20 12 16-9 4 16-20 10z" fill="#80d2f9"/>
    <path d="M54 10l18 10v41l-16 10-4-16V29z" fill="#7ecbef"/>
    <path d="M36 17l20 12v23L36 64 16 52V29z" fill="#e4e6e8"/>
    <path d="M36 23l15 8-15 9-15-9z" fill="#c4e4f6"/>
    <path d="M21 31l15 9v18l-15-9z" fill="#a6d9f4"/>
    <path d="M51 31L36 40v18l15-9z" fill="#7cc6ec"/>
  </svg>
  <div class="wm-text"><strong>3D世界网</strong><small>WWW.3DSJW.COM</small></div>
</div>
</body>
</html>
```
FILE: styles.css
```css
* { box-sizing: border-box; }
html, body { margin: 0; padding: 0; }
body {
  width: 1374px; height: 736px; overflow: hidden; position: relative;
  font-family: "Noto Sans CJK SC", "Liberation Sans", sans-serif;
  font-size: 12px; color: #222; background: #fff;
}
i { font-style: normal; display: block; }
svg { display: block; flex: none; }
.defs { position: absolute; width: 0; height: 0; }

.upper { display: flex; height: 728px; }
.strip { width: 8px; background: #f0f0f0; display: flex; flex-direction: column; align-items: center; }
.strip-top { height: 125px; width: 100%; border-bottom: 1px solid #c8c8c8; flex: none; }
.strip-tri { margin-top: 7px; border: 3px solid transparent; border-bottom-color: #333; border-top: 0; flex: none; }
.strip-gray { margin-top: 22px; height: 24px; width: 100%; background: #cfcfcf; flex: none; }
.strip-down { margin-top: auto; border: 3px solid transparent; border-top-color: #333; border-bottom: 0; flex: none; }
.strip-check { margin-top: 9px; height: 24px; width: 100%; background: #fff; border: 1px solid #bcd0e0; border-left: 0; display: flex; align-items: center; flex: none; }
.strip-check svg { width: 7px; height: 8px; }
.main { flex: 1; min-width: 0; display: flex; flex-direction: column; }

/* title bar */
.titlebar { height: 26px; display: flex; align-items: center; background: #fff; position: relative; }
.qat {
  display: grid; align-items: center; justify-items: center; height: 26px; padding-left: 4px;
  grid-template-columns: 33px 8px 28px 2px 26px 10px 24px 4px 26px 20px 26px 2px 28px 8px 8px 22px 6px 24px 44px 27px 24px 9px 14px;
}
.logo { font: bold 23px/26px "Liberation Sans", sans-serif; color: #8ba3b5; width: 33px; letter-spacing: -.5px; }
.qsep { width: 1px; height: 18px; background: #d0d0d0; }
.q14 { width: 14px; height: 14px; }
.q16 { width: 16px; height: 16px; }
.q-win { justify-self: start; margin-left: 7px; }
.dim { opacity: .9; }
.a6 { width: 7px; height: 4px; }
.a7 { width: 11px; height: 6px; }
.faint { opacity: .35; }
.qtext { font-size: 11px; color: #222; white-space: nowrap; }
.cust { width: 7px; height: 6px; }
.doc-title { position: absolute; left: 785px; top: 0; line-height: 26px; font-size: 13px; color: #222; }
.brand { margin-left: auto; font: bold 13px/28px "Liberation Sans", sans-serif; color: #0f9a9a; letter-spacing: .5px; }
.winctl { display: flex; gap: 10px; margin-left: 24px; padding-right: 6px; }
.winctl svg { width: 14px; height: 14px; }

/* tabs */
.tabs { height: 28px; background: #dcdcdc; display: flex; align-items: stretch; }
.tab-file { width: 81px; background: #57a0b9; color: #fff; font-size: 13px; line-height: 26px; text-align: center; margin-right: 2px; }
.tab { padding: 0 13px; font-size: 13px; line-height: 26px; color: #222; }
.tab.active { background: #fff; color: #1c7f9e; }
.tabs-right { margin-left: auto; display: flex; align-items: center; }
.search { width: 125px; height: 20px; border: 1px solid #a8a8a8; background: #fff; display: flex; align-items: center; justify-content: space-between; padding: 0 2px; color: #aaa; font-size: 11px; line-height: 18px; }
.search svg { width: 16px; height: 16px; }
.rt-panel { width: 16px; height: 16px; margin-left: 11px; }
.rt-chev { width: 14px; height: 9px; margin-left: 12px; }
.rt-help { width: 14px; height: 14px; margin: 0 9px 0 12px; }
.help-q { font: bold 11px "Liberation Sans", sans-serif; fill: #fff; text-anchor: middle; }

/* ribbon */
.ribbon { height: 93px; display: flex; align-items: stretch; position: relative; padding-top: 5px; background: #fff; }
.group { display: flex; flex-direction: column; border-right: 1px solid #dcdcdc; height: 84px; position: relative; }
.g1 { width: 90px; }
.g2 { width: 139px; }
.big { display: flex; flex-direction: column; align-items: center; font-size: 11px; line-height: 16px; padding-top: 1px; width: 92px; }
.big span { margin-top: 5px; }
.clap { width: 32px; height: 30px; margin-left: 1px; }
.smalls { display: flex; flex-direction: column; gap: 10px; padding: 3px 0 0 12px; }
.small { display: flex; align-items: center; gap: 4px; font-size: 11px; height: 24px; }
.small span { margin-top: -2px; }
.rb24 { width: 24px; height: 24px; }
.glabel { position: absolute; left: 0; right: 0; bottom: -2px; height: 16px; line-height: 16px; text-align: center; color: #1c7f9e; font-size: 11px; }
.g1 .glabel span { padding-right: 16px; }
.g2 .glabel span { padding-right: 18px; }
.glabel svg { position: absolute; right: 7px; top: 6px; }
.ribbon-more { position: absolute; right: 6px; bottom: 8px; }

/* toolbar */
.toolbar { height: 33px; border-top: 1px solid #dcdcdc; border-bottom: 1px solid #90959a; display: flex; align-items: center; position: relative; }
.menu-btn { display: flex; align-items: center; width: 86px; padding-left: 10px; font-size: 12px; white-space: nowrap; }
.menu-btn > svg:first-child { width: 16px; height: 14px; margin-right: 4px; }
.menu-btn span { margin-right: 3px; }
.tsep { width: 1px; height: 24px; background: #d4d4d4; }
.select { height: 20px; border: 1px solid #9a9a9a; display: flex; align-items: center; justify-content: space-between; padding: 0 4px 0 2px; font-size: 11px; line-height: 18px; }
.s-a { width: 133px; margin: 0 9px 0 12px; }
.s-b { width: 140px; margin-right: 4px; }
.tools {
  display: grid; align-items: center; justify-items: center;
  grid-template-columns: 24px 26px 17px 18px 26px 20px 30px 18px 18px 22px 26px 24px 24px 2px 24px 26px 2px 24px 24px 27px 24px 27px 24px 24px 28px 20px 28px 10px 32px 16px 32px 20px 28px 26px 10px 26px 10px 30px 10px 20px 18px 8px;
}
.tools > div { display: flex; align-items: center; justify-content: center; width: 100%; height: 24px; }
.t16 { width: 16px; height: 16px; }
.t18 { width: 18px; height: 18px; }
.t14 { width: 14px; height: 14px; }
.off { opacity: .75; }
.redbox { width: 16px; height: 16px; border: 1px solid #c8343c; display: flex; align-items: center; justify-content: center; }
.on { width: 22px; height: 22px; background: #cde5ec; border: 1px solid #a9d4e2; display: flex; align-items: center; justify-content: center; }
.toolbar-more { position: absolute; right: 6px; top: 18px; }

/* work area */
.work { height: 526px; display: flex; }
.resbar {
  width: 32px; background: #dcdcdc; border-right: 1px solid #9a9a9a; position: relative;
  display: grid; justify-items: center; align-items: center;
  grid-template-rows: 26px 16px 42px 42px 41px 45px 38px 18px 34px 19px 34px 20px 34px 8px 34px 9px 16px 15px 16px 15px;
}
.r16 { width: 16px; height: 16px; }
.r24 { width: 24px; height: 24px; }
.r26 { width: 26px; height: 26px; }
.res-active { background: #fff; border: 1px solid #9a9a9a; border-right: 0; width: 30px; height: 45px; margin-left: 1px; display: flex; align-items: center; justify-content: center; margin-right: -1px; }
.res-curve { position: absolute; left: 2px; top: 450px; width: 28px; height: 8px; }
.up { transform: rotate(180deg); opacity: .25; }

/* panel */
.panel { width: 234px; border-right: 1px solid #9a9a9a; padding: 0 9px 0 6px; display: flex; flex-direction: column; background: #fff; }
.panel-head { height: 28px; display: flex; align-items: center; justify-content: space-between; padding: 0 6px 0 4px; font-size: 12px; }
.panel-head span { margin-top: -2px; }
.maxbox { width: 12px; height: 12px; border: 1px solid #111; border-top-width: 2px; margin-top: 4px; }
.table { height: 415px; border: 1px solid #dcdcdc; width: 217px; display: flex; flex-direction: column; overflow: hidden; }
.thead { height: 22px; display: flex; background: #f6f6f6; border-bottom: 1px dotted #333; flex: none; }
.th-name { width: 202px; padding-left: 7px; display: flex; align-items: center; border-right: 1px solid #dcdcdc; }
.sort { width: 9px; height: 5px; margin-left: 18px; }
.th-2 { padding-left: 5px; line-height: 21px; overflow: hidden; flex: 1; }
.tree { flex: 1; position: relative; overflow: hidden; min-height: 0; }
.row { height: 20px; display: flex; border-bottom: 1px solid #eeeeee; }
.row.alt { background: #fafafa; }
.name { width: 202px; display: flex; align-items: center; padding-left: 6px; white-space: nowrap; border-right: 1px solid #eeeeee; position: relative; }
.name span, .name b { margin-top: -2px; }
.name.leaf { padding-left: 29px; }
.name b { font-weight: 700; }
.c2 { flex: 1; overflow: hidden; }
.exp { width: 9px; height: 9px; border: 1px solid #ccc; background: #fff; position: relative; flex: none; }
.exp::before { content: ""; position: absolute; left: 1px; right: 1px; top: 3px; height: 1px; background: #111; }
.plus::after { content: ""; position: absolute; top: 1px; bottom: 1px; left: 3px; width: 1px; background: #111; }
.noexp { width: 9px; height: 9px; flex: none; }
.dash { width: 3px; border-top: 1px dotted #888; flex: none; margin: 0 1px 0 0; }
.leaf .dash { width: 11px; margin-right: 1px; }
.ric { width: 16px; height: 15px; margin-right: 3px; flex: none; }
.rchk { width: 13px; height: 12px; margin: 0 1px 0 3px; flex: none; }
.focus { outline: 1px dotted #222; padding-right: 130px; line-height: 19px; margin-left: 0; }
.cb { width: 12px; height: 12px; margin-right: 2px; flex: none; }
.fic { width: 15px; height: 15px; margin-right: 4px; flex: none; }
.mute { color: #a8a8a8; }
.st { width: 11px; height: 10px; margin: 5px 0 0 5px; }
.dots-v { position: absolute; border-left: 1px dotted #888; z-index: 1; }
.dv1 { left: 9px; top: 8px; height: 60px; }
.dv2 { left: 29px; top: 78px; height: 191px; }
.hscroll { height: 16px; margin: 1px 1px 2px; background: #efefef; display: flex; align-items: center; justify-content: space-between; flex: none; }
.hscroll svg { width: 8px; height: 10px; margin: 0 4px; }
.track { flex: 1; height: 15px; }
.track i { width: 96px; height: 15px; background: #c8c8c8; margin-left: 1px; }
.splitter { height: 5px; background: #d4d4d4; border: 1px solid #b0b0b0; width: 218px; flex: none; }
.acc { width: 218px; height: 24px; border-bottom: 2px solid #d0d0d0; display: flex; align-items: center; justify-content: space-between; padding: 2px 6px 0 7px; font-size: 13px; color: #1b7fa3; flex: none; }
.acc svg { width: 12px; height: 9px; margin-top: -2px; }

/* graphics */
.graphics { flex: 1; min-width: 0; display: flex; flex-direction: column; }
.doc-tabs { height: 23px; border-bottom: 2px solid #57a0b9; flex: none; }
.doc-tab { width: 104px; height: 21px; background: #57a0b9; color: #fff; display: flex; align-items: center; padding-left: 7px; font-size: 12px; }
.doc-tab svg { width: 14px; height: 14px; margin-right: 6px; }
.doc-tab b { margin-left: 6px; font-size: 12px; font-family: "DejaVu Sans", sans-serif; }
.canvas { flex: 1; position: relative; background: linear-gradient(#b4b5b6, #e6e7e9); overflow: hidden; }
.scene { position: absolute; inset: 0; width: 100%; height: 100%; }
.triad { position: absolute; left: 40px; top: 414px; width: 44px; height: 62px; overflow: visible; }
.tz { font: 11px "Liberation Sans", sans-serif; fill: #1a30d0; text-anchor: middle; }
.tx { font: 11px "Liberation Sans", sans-serif; fill: #c83030; text-anchor: middle; }

/* status */
.status { height: 22px; border-top: 1px solid #9a9a9a; display: flex; align-items: center; position: relative; background: #fff; }
.status-msg { position: absolute; left: 630px; font-size: 11px; font-weight: 700; color: #333; }
.status-ic { margin-left: auto; display: flex; gap: 5px; padding-right: 55px; }
.flag { width: 16px; height: 16px; }

.taskbar { height: 8px; background: #000; overflow: hidden; position: relative; color: #fff; }
.taskbar span { position: absolute; left: 1318px; top: 2px; font-size: 12px; line-height: 14px; }

/* watermark */
.watermark { position: absolute; left: 1091px; top: 642px; display: flex; gap: 7px; pointer-events: none; }
.watermark svg { width: 72px; height: 81px; }
.wm-text { display: flex; flex-direction: column; margin-top: 7px; color: #f1f2f4; }
.wm-text strong { font: 700 40px/44px "Noto Sans CJK SC", sans-serif; letter-spacing: 1.500px; white-space: nowrap; }
.wm-text small { font: 700 14px/14px "Liberation Sans", sans-serif; letter-spacing: 4px; margin-top: 6px; white-space: nowrap; }
```
